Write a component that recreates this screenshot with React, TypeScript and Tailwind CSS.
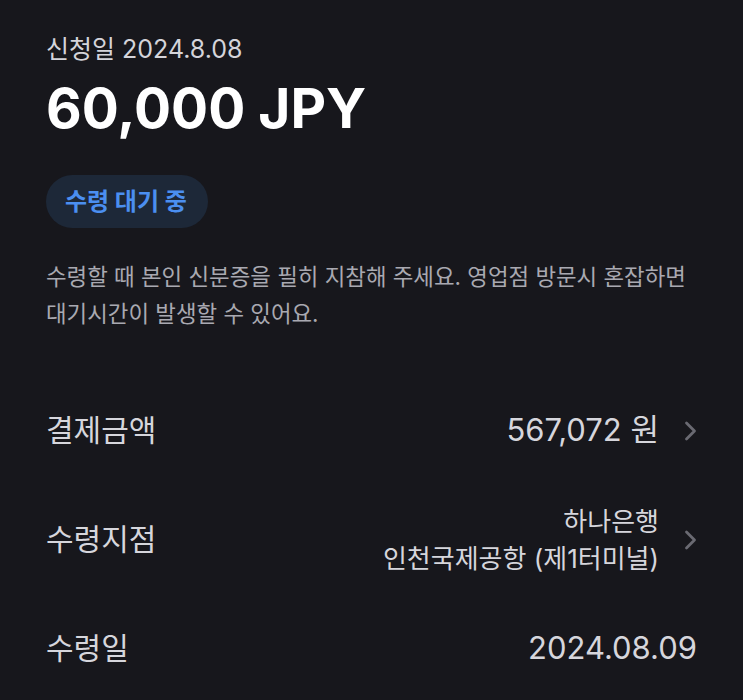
import React from "react";

const font = { fontFamily: 'Inter, "Noto Sans CJK KR", sans-serif' };

function Chevron() {
  return (
    <svg width="14" height="22" viewBox="0 0 14 22" fill="none" className="shrink-0">
      <path d="M3.5 3l8 8-8 8" stroke="#6a6a72" strokeWidth="2.8" strokeLinecap="round" strokeLinejoin="round" />
    </svg>
  );
}

export default function App() {
  return (
    <div className="w-[743px] h-[700px] bg-[#17171c] overflow-hidden px-[46px] pt-[33px]" style={font}>
      <div className="text-[25px] leading-[32px] text-[#d4d4da]">신청일 2024.8.08</div>
      <div className="mt-[8px] text-[55px] leading-[70px] font-bold text-white">60,000 JPY</div>
      <div className="mt-[32px] inline-flex items-center h-[53px] pl-[19px] pr-[21px] rounded-full bg-[#1d2838] text-[24px] font-bold text-[#4b8ff0]">
        수령 대기 중
      </div>
      <p className="mt-[30px] text-[22.4px] leading-[37px] text-[#a9a9b1] break-keep">
        수령할 때 본인 신분증을 필히 지참해 주세요. 영업점 방문시 혼잡하면 대기시간이 발생할 수 있어요.
      </p>
      <div className="mt-[44px] flex flex-col">
        <div className="h-[109px] flex items-center justify-between">
          <span className="text-[30px] text-[#d6d6dc]">결제금액</span>
          <div className="flex items-center gap-[24px]">
            <span className="text-[31px] text-[#d6d6dc]">567,072 원</span>
            <Chevron />
          </div>
        </div>
        <div className="h-[109px] flex items-center justify-between">
          <span className="text-[30px] text-[#d6d6dc]">수령지점</span>
          <div className="flex items-center gap-[24px]">
            <div className="text-right text-[26px] leading-[37px] text-[#d6d6dc]">
              <div>하나은행</div>
              <div>인천국제공항 (제1터미널)</div>
            </div>
            <Chevron />
          </div>
        </div>
        <div className="h-[109px] flex items-center justify-between">
          <span className="text-[30px] text-[#d6d6dc]">수령일</span>
          <span className="text-[31px] text-[#d6d6dc]">2024.08.09</span>
        </div>
      </div>
    </div>
  );
}
